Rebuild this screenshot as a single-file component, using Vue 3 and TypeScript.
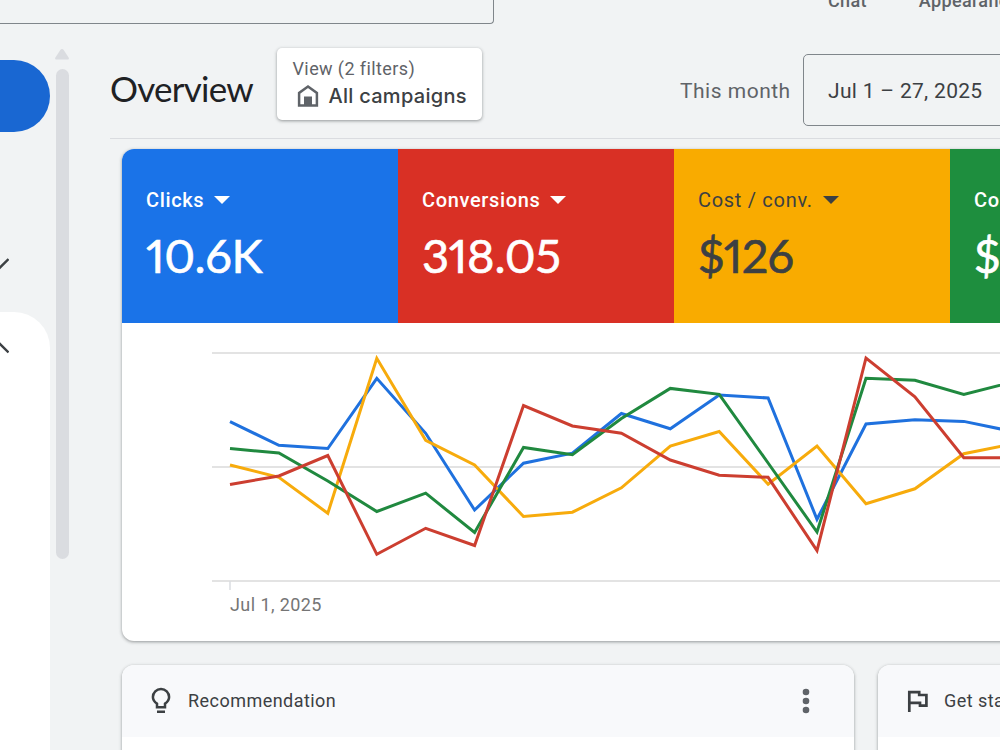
<script setup lang="ts">
import { ref } from "vue"

interface Metric {
  key: string
  label: string
  value: string
}

interface Series {
  key: string
  values: number[]
}

const metrics = ref<Metric[]>([
  { key: "clicks", label: "Clicks", value: "10.6K" },
  { key: "conversions", label: "Conversions", value: "318.05" },
  { key: "cpa", label: "Cost / conv.", value: "$126" },
  { key: "cost", label: "Cost", value: "$40.1K" }
])

// chart coordinates, one value per day
const startX = 108
const stepX = 48.92
const gridY = [30, 144, 258]

const series: Series[] = [
  { key: "clicks", values: [98.7, 122.3, 125.5, 55.3, 110.3, 187, 140.2, 130.2, 90.5, 105.8, 72, 75, 196.3, 101, 96.7, 98.4, 108.5] },
  { key: "cpa", values: [142, 154.3, 190.3, 35.3, 117.3, 142, 193.5, 189.2, 164.8, 123, 108.5, 161.2, 123, 180.8, 165.8, 130.7, 121] },
  { key: "cost", values: [125.5, 130, 158, 188.5, 170.2, 209.5, 124.5, 131.7, 95.5, 65.4, 71.3, 140, 209, 55.2, 57.2, 71.5, 59] },
  { key: "conversions", values: [161.5, 153, 132.5, 231.3, 205.3, 222.5, 82.5, 103, 110.3, 137, 152.3, 154.3, 227.5, 35, 73.7, 134.8, 134.8] }
]

function toPoints(values: number[]): string {
  return values.map((v, i) => `${(startX + i * stepX).toFixed(1)},${v}`).join(" ")
}
</script>

<template>
  <div class="page">
    <header class="topbar">
      <div class="search"></div>
      <span class="tool chat">Chat</span>
      <span class="tool">Appearance</span>
    </header>

    <div class="body">
      <aside class="sidebar">
        <button class="create-btn" aria-label="Create"></button>
        <svg class="chevron down" viewBox="0 0 24 24" width="24" height="24">
          <path d="M0.5 6 L12 17.5 L23.5 6" />
        </svg>
        <div class="nav-card">
          <svg class="chevron up" viewBox="0 0 24 24" width="24" height="24">
            <path d="M0.5 17.5 L12 6 L23.5 17.5" />
          </svg>
        </div>
      </aside>

      <div class="scroller">
        <svg viewBox="0 0 14 11" width="14" height="11">
          <path d="M7 0 Q8 0 9 1.4 L13.6 8.6 Q14.4 10.4 13 10.6 H1 Q-.4 10.4 .4 8.6 L5 1.4 Q6 0 7 0Z" fill="#dadce0" />
        </svg>
        <div class="thumb"></div>
      </div>

      <main class="content">
        <div class="title-row">
          <h1>Overview</h1>
          <button class="view-chip">
            <span class="view-label">View (2 filters)</span>
            <span class="view-value">
              <svg viewBox="0 0 22 24" width="22" height="24">
                <path d="M2.1 21.6 V9 L11 2.6 L19.9 9 V21.6 Z" fill="none" stroke="#5f6368" stroke-width="2.5" />
                <path d="M7 12.5 H15 V22 H7 Z" fill="#5f6368" />
              </svg>
              <span>All campaigns</span>
            </span>
          </button>
          <span class="period">This month</span>
          <button class="date-box">Jul 1 – 27, 2025</button>
        </div>

        <section class="card chart-card">
          <div class="metrics">
            <div v-for="m in metrics" :key="m.key" class="metric" :class="m.key">
              <div class="metric-label">
                <span>{{ m.label }}</span>
                <svg viewBox="0 0 16 8" width="16" height="8">
                  <path d="M0 0 H16 L8 8 Z" fill="currentColor" />
                </svg>
              </div>
              <div class="metric-value">{{ m.value }}</div>
            </div>
          </div>
          <div class="chart">
            <svg viewBox="0 0 900 270" width="900" height="270">
              <line v-for="y in gridY" :key="y" x1="90" x2="900" :y1="y" :y2="y" class="grid" />
              <line x1="108" x2="108" y1="258" y2="267" class="tick" />
              <polyline v-for="s in series" :key="s.key" :points="toPoints(s.values)" class="line" :class="s.key" />
            </svg>
            <div class="axis-label">Jul 1, 2025</div>
          </div>
        </section>

        <div class="tiles">
          <section class="card tile">
            <div class="tile-head">
              <svg class="tile-icon" viewBox="0 0 24 28" width="24" height="28">
                <path d="M8 20.2 V16.6 C5.4 15 3.9 12.9 3.9 10 A8.1 8.1 0 0 1 20.1 10 C20.1 12.9 18.6 15 16 16.6 V20.2 Z" fill="none" stroke="#3c4043" stroke-width="2.5" />
                <path d="M8 24.8 H16" stroke="#3c4043" stroke-width="2.5" />
              </svg>
              <span class="tile-title">Recommendation</span>
              <svg class="more" viewBox="0 0 8 26" width="8" height="26">
                <circle cx="4" cy="4" r="3.3" />
                <circle cx="4" cy="13" r="3.3" />
                <circle cx="4" cy="22" r="3.3" />
              </svg>
            </div>
          </section>
          <section class="card tile">
            <div class="tile-head">
              <svg class="tile-icon" viewBox="0 0 24 28" width="24" height="28">
                <path d="M4.3 25 V5.2 H14.2 V8 H21.4 V18.6 H15 V15.8 H4.3" fill="none" stroke="#3c4043" stroke-width="2.7" />
              </svg>
              <span class="tile-title">Get started</span>
            </div>
          </section>
        </div>
      </main>
    </div>
  </div>
</template>

<style>
body {
  margin: 0;
  overflow: hidden;
}
</style>

<style scoped>
.page {
  width: 1000px;
  height: 750px;
  overflow: hidden;
  display: flex;
  flex-direction: column;
  background: #f1f3f4;
  font-family: Roboto, sans-serif;
  color: #3c4043;
}

.page * {
  box-sizing: border-box;
}

button {
  font-family: inherit;
  cursor: pointer;
}

.topbar {
  height: 24px;
  flex: none;
  display: flex;
  overflow: hidden;
  white-space: nowrap;
}

.search {
  width: 494px;
  height: 24px;
  flex: none;
  border: solid #80868b;
  border-width: 0 1px 1px 0;
  border-radius: 0 0 4px 0;
}

.tool {
  flex: none;
  margin-top: -10px;
  margin-left: 52px;
  font-size: 18px;
  line-height: 22px;
  font-weight: 500;
  letter-spacing: 0.35px;
  color: #5f6368;
}

.chat {
  margin-left: 334px;
}

.body {
  flex: 1;
  min-height: 0;
  display: flex;
}

.sidebar {
  width: 50px;
  flex: none;
  padding-top: 36px;
  display: flex;
  flex-direction: column;
  overflow: hidden;
}

.create-btn {
  width: 50px;
  height: 72px;
  flex: none;
  border: none;
  border-radius: 0 36px 36px 0;
  background: #1967d2;
}

.chevron {
  display: block;
  flex: none;
  margin-left: -15px;
}

.chevron path {
  fill: none;
  stroke: #3c4043;
  stroke-width: 2.4;
}

.down {
  margin-top: 121px;
}

.nav-card {
  margin-top: 35px;
  flex: 1;
  padding-top: 23px;
  background: #fff;
  border-radius: 0 36px 0 0;
}

.scroller {
  width: 60px;
  flex: none;
  padding: 25px 0 0 5px;
}

.scroller svg {
  display: block;
}

.thumb {
  width: 13px;
  height: 490px;
  margin: 9px 0 0 1px;
  border-radius: 7px;
  background: #dadce0;
}

.content {
  flex: none;
  width: 1100px;
}

.title-row {
  height: 115px;
  border-bottom: 1px solid #dadce0;
  display: flex;
  align-items: flex-start;
  white-space: nowrap;
}

h1 {
  width: 167px;
  margin: 42px 0 0;
  font-family: Lato, sans-serif;
  font-size: 35px;
  line-height: 44px;
  font-weight: 400;
  letter-spacing: -0.75px;
  color: #202124;
}

.view-chip {
  width: 205px;
  height: 72px;
  margin-top: 24px;
  padding: 10px 0 0 15.5px;
  display: flex;
  flex-direction: column;
  align-items: flex-start;
  border: none;
  border-radius: 5px;
  background: #fff;
  box-shadow: 0 1px 3px rgba(60, 64, 67, 0.4), 0 1px 4px rgba(60, 64, 67, 0.15);
}

.view-label {
  font-size: 18px;
  line-height: 22px;
  letter-spacing: 0.4px;
  color: #5f6368;
}

.view-value {
  margin: 3px 0 0 4px;
  display: flex;
  align-items: center;
  gap: 10px;
  font-family: Inter, sans-serif;
  font-size: 20px;
  line-height: 26px;
  font-weight: 500;
  letter-spacing: 0.28px;
  color: #3c4043;
}

.period {
  width: 123px;
  margin: 53px 0 0 198px;
  font-size: 21px;
  line-height: 28px;
  letter-spacing: 0.5px;
  color: #5f6368;
}

.date-box {
  width: 280px;
  height: 72px;
  margin-top: 30px;
  padding: 2px 24px 0;
  text-align: left;
  border: 1px solid #80868b;
  border-radius: 5px;
  background: transparent;
  font-size: 21px;
  letter-spacing: 0.3px;
  color: #3c4043;
}

.card {
  border-radius: 12px;
  overflow: hidden;
  background: #fff;
  box-shadow: 0 1px 3px rgba(60, 64, 67, 0.4), 0 1px 4px rgba(60, 64, 67, 0.15);
}

.chart-card {
  height: 492px;
  margin: 10px 0 0 12px;
}

.metrics {
  display: flex;
}

.metric {
  width: 276px;
  height: 174px;
  flex: none;
  padding: 38px 24px 0;
  color: #fff;
}

.metric.clicks {
  background: #1a73e8;
}

.metric.conversions {
  background: #d93025;
}

.metric.cpa {
  background: #f9ab00;
  color: #3c4043;
}

.metric.cost {
  background: #1e8e3e;
}

.metric-label {
  display: flex;
  align-items: center;
  gap: 10px;
  font-size: 20px;
  line-height: 26px;
  font-weight: 500;
  letter-spacing: 0.65px;
}

.cpa .metric-label {
  font-weight: 400;
  letter-spacing: 0.7px;
}

.metric-value {
  margin-top: 14px;
  font-family: Lato, sans-serif;
  font-size: 47px;
  line-height: 56px;
  letter-spacing: -0.3px;
  font-feature-settings: "pnum";
  -webkit-text-stroke: 0.6px currentColor;
}

.cpa .metric-value {
  letter-spacing: -0.7px;
}

.chart svg {
  display: block;
}

.grid {
  stroke: #e3e3e3;
  stroke-width: 2;
}

.tick {
  stroke: #dadce0;
  stroke-width: 1.5;
}

.line {
  fill: none;
  stroke-width: 3;
  stroke-linejoin: miter;
}

.line.clicks {
  stroke: #1f71de;
}

.line.conversions {
  stroke: #cc3e30;
}

.line.cpa {
  stroke: #f7ab0c;
}

.line.cost {
  stroke: #20893f;
}

.axis-label {
  padding-left: 108px;
  font-size: 18px;
  line-height: 24px;
  letter-spacing: 0.42px;
  color: #757575;
}

.tiles {
  margin: 24px 0 0 12px;
  display: flex;
  gap: 24px;
}

.tile {
  width: 732px;
  height: 300px;
  flex: none;
}

.tile-head {
  height: 72px;
  padding: 0 44px 0 27px;
  display: flex;
  align-items: center;
  background: #f8f9fb;
}

.tile-title {
  flex: 1;
  margin-left: 15px;
  padding-bottom: 2px;
  font-size: 18px;
  letter-spacing: 0.46px;
}

.more {
  fill: #5f6368;
}
</style>
